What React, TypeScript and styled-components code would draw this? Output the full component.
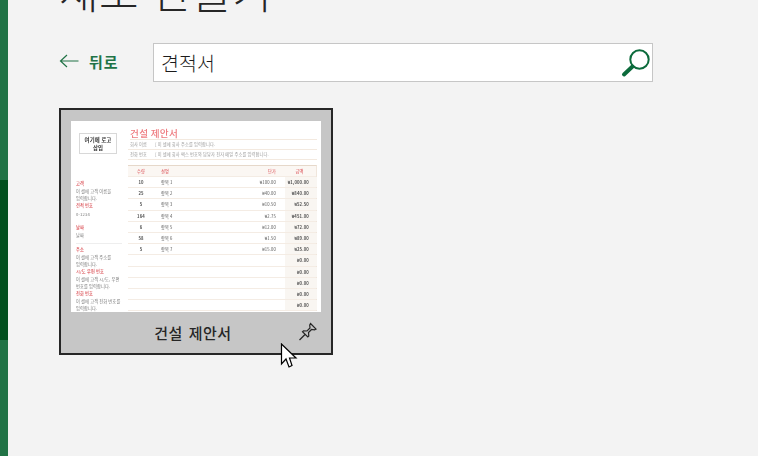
import React from "react";
import styled, { createGlobalStyle } from "styled-components";

const Global = createGlobalStyle`
  html, body { margin: 0; padding: 0; height: 100%; overflow: hidden; background: #f3f3f3; }
  #root { height: 100%; }
  * { box-sizing: border-box; }
`;
const KR = `"Noto Sans CJK KR", "Noto Sans", sans-serif`;

const Page = styled.div`
  display: flex;
  width: 758px;
  height: 456px;
  overflow: hidden;
  position: relative;
  font-family: ${KR};
`;
const Rail = styled.nav`
  width: 8px;
  height: 456px;
  background: #217346;
  padding-top: 180px;
  flex: none;
`;
const RailActive = styled.div`
  height: 160px;
  background: #024f1e;
`;
const Main = styled.main`
  flex: 1;
  padding-left: 51px;
  display: flex;
  flex-direction: column;
  align-items: flex-start;
`;
const Title = styled.h1`
  margin: -40px 0 0 0;
  height: 83px;
  font-size: 43px;
  line-height: 60px;
  font-weight: 300;
  letter-spacing: 0.5px;
  word-spacing: 3px;
  color: #262626;
  white-space: nowrap;
`;
const SearchRow = styled.div`
  display: flex;
  align-items: center;
  height: 39px;
`;
const Back = styled.div`
  display: flex;
  align-items: center;
  width: 94px;
  gap: 10px;
  margin-top: -3px;
  color: #217346;
  font-size: 15px;
  font-weight: 700;
  letter-spacing: 0.9px;
`;
const SearchBox = styled.div`
  width: 500px;
  height: 39px;
  background: #fff;
  border: 1px solid #c6c6c6;
  display: flex;
  align-items: center;
  justify-content: space-between;
  padding: 0 0 0 7px;
  font-size: 19.5px;
  font-weight: 300;
  color: #1c1c1c;
`;
const Card = styled.div`
  margin-top: 26px;
  width: 274px;
  height: 247px;
  background: #c6c6c6;
  border: 2px solid #262626;
  padding: 11px 10px 0;
  display: flex;
  flex-direction: column;
`;
const Doc = styled.div`
  width: 250px;
  height: 191px;
  background: #fff;
  display: grid;
  grid-template-columns: 57px 1fr;
  overflow: hidden;
  filter: blur(0.55px);
  font-size: 4.2px;
  line-height: 7px;
  letter-spacing: 0.15px;
  color: #555;
`;
const DocSide = styled.div`
  padding: 12px 0 0 5px;
  display: flex;
  flex-direction: column;
  min-width: 0;
`;
const LogoBox = styled.div`
  width: 38px;
  height: 21px;
  margin-left: 3px;
  margin-bottom: 26px;
  border: 1.5px solid #d8d8d8;
  display: flex;
  align-items: center;
  justify-content: center;
  text-align: center;
  font-size: 5.4px;
  line-height: 8px;
  font-weight: 700;
  color: #333;
  white-space: nowrap;
`;
const SideHead = styled.div<{ $after?: number }>`
  color: #d9484e;
  font-weight: 500;
  height: 7px;
  white-space: nowrap;
  margin-bottom: ${(p) => p.$after ?? 1}px;
`;
const SideText = styled.div<{ $gap?: number; $rule?: boolean }>`
  color: #777;
  width: 46px;
  white-space: nowrap;
  margin-bottom: ${(p) => p.$gap ?? 0}px;
  padding-bottom: ${(p) => (p.$rule ? 4 : 0)}px;
  border-bottom: ${(p) => (p.$rule ? "1px solid #eee" : "0")};
`;
const DocBody = styled.div`
  padding: 5px 4px 0 0;
  display: flex;
  flex-direction: column;
  min-width: 0;
`;
const DocTitle = styled.div`
  margin-left: 2px;
  color: #ee7b7f;
  font-size: 9.6px;
  line-height: 14px;
  letter-spacing: 0.3px;
  font-weight: 500;
  height: 14px;
  border-bottom: 1px solid #f3e9df;
`;
const InfoRow = styled.div`
  display: flex;
  height: 10px;
  align-items: center;
  border-bottom: 1px solid #f3e9df;
  color: #999;
  padding-left: 2px;
  white-space: nowrap;
`;
const InfoLabel = styled.span`
  width: 25px;
`;
const Table = styled.div`
  margin-top: 5px;
  border-top: 1px solid #e6d8ca;
  border-right: 1px solid #f0e6dc;
`;
const TRow = styled.div<{ $head?: boolean }>`
  display: grid;
  grid-template-columns: 26px 81px 50px 32px;
  height: ${(p) => (p.$head ? 11 : 11.2)}px;
  align-items: center;
  border-bottom: 1px solid #f4ece4;
  background: ${(p) => (p.$head ? "#fbf7f3" : "transparent")};
  color: ${(p) => (p.$head ? "#d9484e" : "#555")};
`;
const Cell = styled.span<{ $align?: string; $shade?: boolean; $bold?: boolean; $pad?: string }>`
  text-align: ${(p) => p.$align ?? "left"};
  height: 100%;
  line-height: 11px;
  padding: ${(p) => p.$pad ?? "0"};
  background: ${(p) => (p.$shade ? "#f9f6f2" : "transparent")};
  font-weight: ${(p) => (p.$bold ? 700 : 400)};
  white-space: nowrap;
  overflow: hidden;
`;
const Caption = styled.div`
  flex: 1;
  display: flex;
  align-items: center;
  justify-content: center;
  position: relative;
  padding: 0 6px 0 0;
  font-size: 15px;
  font-weight: 500;
  color: #262626;
  letter-spacing: 0.5px;
  word-spacing: 2px;
`;
const PinWrap = styled.span`
  position: absolute;
  right: 3px;
  top: 10px;
  display: flex;
`;
const Cursor = styled.svg`
  position: absolute;
  left: 280px;
  top: 343px;
`;

const rows = [
  ["10", "항목 1", "₩100.00", "₩1,000.00"],
  ["25", "항목 2", "₩40.00", "₩840.00"],
  ["5", "항목 3", "₩10.50", "₩52.50"],
  ["164", "항목 4", "₩2.75", "₩451.00"],
  ["6", "항목 5", "₩12.00", "₩72.00"],
  ["58", "항목 6", "₩1.50", "₩89.00"],
  ["5", "항목 7", "₩15.00", "₩25.00"],
  ["", "", "", "₩0.00"],
  ["", "", "", "₩0.00"],
  ["", "", "", "₩0.00"],
  ["", "", "", "₩0.00"],
  ["", "", "", "₩0.00"],
];

export default function App() {
  return (
    <Page>
      <Global />
      <Rail>
        <RailActive />
      </Rail>
      <Main>
        <Title>새로 만들기</Title>
        <SearchRow>
          <Back>
            <svg width="20" height="14" viewBox="0 0 20 14" fill="none" stroke="#217346" strokeWidth="1.2">
              <path d="M8 1 L1.5 7 L8 13 M1.5 7 H19.5" />
            </svg>
            뒤로
          </Back>
          <SearchBox>
            견적서
            <svg width="32" height="32" viewBox="0 0 32 32" fill="none" stroke="#0c6b3c">
              <circle cx="19.5" cy="12.5" r="9.2" strokeWidth="2" />
              <path d="M12.5 19.5 L4 27.5" strokeWidth="4" strokeLinecap="round" />
            </svg>
          </SearchBox>
        </SearchRow>
        <Card>
          <Doc>
            <DocSide>
              <LogoBox>
                여기에 로고
                <br />
                삽입
              </LogoBox>
              <SideHead>고객</SideHead>
              <SideText>
                이 셀에 고객 이름을
                <br />
                입력합니다.
              </SideText>
              <SideHead $after={2}>견적 번호</SideHead>
              <SideText $gap={6}>0-1234</SideText>
              <SideHead>날짜</SideHead>
              <SideText $rule $gap={2}>날짜</SideText>
              <SideHead>주소</SideHead>
              <SideText>
                이 셀에 고객 주소를
                <br />
                입력합니다.
              </SideText>
              <SideHead>시/도 우편 번호</SideHead>
              <SideText>
                이 셀에 고객 시/도, 우편
                <br />
                번호를 입력합니다.
              </SideText>
              <SideHead>전화 번호</SideHead>
              <SideText>
                이 셀에 고객 전화 번호를
                <br />
                입력합니다.
              </SideText>
            </DocSide>
            <DocBody>
              <DocTitle>건설 제안서</DocTitle>
              <InfoRow>
                <InfoLabel>회사 이름</InfoLabel>[ 이 셀에 회사 주소를 입력합니다.
              </InfoRow>
              <InfoRow>
                <InfoLabel>전화 번호</InfoLabel>[ 이 셀에 회사 팩스 번호와 담당자 전자 메일 주소를 입력합니다.
              </InfoRow>
              <Table>
                <TRow $head>
                  <Cell $align="center">수량</Cell>
                  <Cell $pad="0 0 0 7px">설명</Cell>
                  <Cell $align="right" $pad="0 9px 0 0">단가</Cell>
                  <Cell $align="center" $pad="0 3px 0 0">금액</Cell>
                </TRow>
                {rows.map((r, i) => (
                  <TRow key={i}>
                    <Cell $align="center" $bold>{r[0]}</Cell>
                    <Cell $pad="0 0 0 7px">{r[1]}</Cell>
                    <Cell $align="right" $pad="0 9px 0 0">{r[2]}</Cell>
                    <Cell $align="right" $shade $bold $pad="0 8px 0 0">{r[3]}</Cell>
                  </TRow>
                ))}
              </Table>
            </DocBody>
          </Doc>
          <Caption>
            건설 제안서
            <PinWrap>
              <svg width="20" height="20" viewBox="0 0 20 20" fill="none" stroke="#262626" strokeWidth="1.2">
                <path d="M12.5 1.5 L18 7 L16.5 7.8 L13.5 7.5 L10.5 10.5 L10.8 14 L9.8 15 L4.5 9.7 L5.5 8.8 L9 9 L12 6 L11.7 3 Z" />
                <path d="M7 12.5 L1.5 18" />
              </svg>
            </PinWrap>
          </Caption>
        </Card>
      </Main>
      <Cursor width="18" height="26" viewBox="0 0 18 26">
        <path d="M1.5 1 V21 L6 16 L9 24 L12 22.5 L9.5 15 H16 Z" fill="#fff" stroke="#000" strokeWidth="1.2" />
      </Cursor>
    </Page>
  );
}
